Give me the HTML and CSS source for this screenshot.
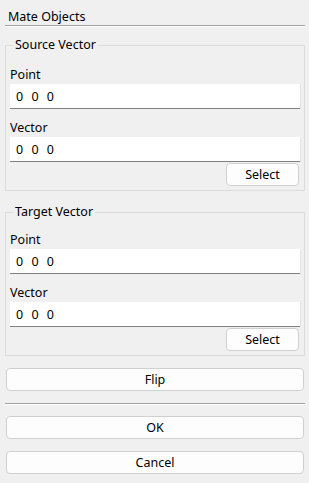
FILE: index.html
```html
<!DOCTYPE html>
<html lang="en">
<head>
  <meta charset="UTF-8" />
  <title>Mate Objects</title>
  <link rel="stylesheet" href="styles.css">
</head>
<body>

<div class="panel">
  <div class="header">Mate Objects</div>

  <fieldset class="group">
    <legend>Source Vector</legend>
    <label>Point</label>
    <input type="text" class="vec" value="0 0 0" />
    <label>Vector</label>
    <input type="text" class="vec" value="0 0 0" />
    <div class="row">
      <button type="button" class="select">Select</button>
    </div>
  </fieldset>

  <fieldset class="group target">
    <legend>Target Vector</legend>
    <label>Point</label>
    <input type="text" class="vec" value="0 0 0" />
    <label>Vector</label>
    <input type="text" class="vec" value="0 0 0" />
    <div class="row">
      <button type="button" class="select">Select</button>
    </div>
  </fieldset>

  <button type="button" class="wide flip">Flip</button>
  <div class="sep"></div>
  <button type="button" class="wide ok">OK</button>
  <button type="button" class="wide cancel">Cancel</button>
</div>

</body>
</html>
```

FILE: styles.css
```css
body {
  margin: 0;
  background-color: #f0f0f0;
  font-family: "Noto Sans", Arial, sans-serif;
  font-size: 12.5px;
  color: #000;
}

.panel {
  margin: 0 4px 0 5px;
  display: flex;
  flex-direction: column;
}

.header {
  padding: 8px 3px 0;
  line-height: 17px;
  border-bottom: 1px solid #a0a0a0;
  box-shadow: 0 1px 0 #fff;
}

.group {
  margin: 11px 0 0;
  padding: 0 4px 4px;
  border: 1px solid #dcdcdc;
  display: flex;
  flex-direction: column;
  min-width: 0;
}

.group.target {
  margin-top: 13px;
}

legend {
  margin-left: 3px;
  padding: 0 2px;
  line-height: 16px;
}

label {
  display: block;
  line-height: 16px;
  margin: 11px 0 1px;
}

legend + label {
  margin-top: 14px;
}

.target legend + label {
  margin-top: 12px;
}

input.vec {
  height: 24px;
  margin: 0;
  padding: 0 6px;
  border: none;
  border-bottom: 1px solid #808080;
  box-shadow: 1px 0 0 #e4e4e4;
  background: #fff;
  font-family: inherit;
  font-size: 12.5px;
  color: #000;
  word-spacing: 5px;
  outline: none;
}

.row {
  display: flex;
  justify-content: flex-end;
  padding: 1px 1px 0;
}

button {
  font-family: inherit;
  font-size: 12.5px;
  color: #000;
  background: #fdfdfd;
  border: 1px solid #d0d0d0;
  border-radius: 4px;
  height: 23px;
  padding: 0;
}

button.select {
  width: 73px;
}

button.wide {
  margin: 0 1px 0 1px;
}

button.flip {
  margin-top: 12px;
}

.sep {
  margin-top: 12px;
  border-top: 1px solid #a0a0a0;
  box-shadow: 0 1px 0 #fff;
}

button.ok {
  margin-top: 12px;
}

button.cancel {
  margin-top: 12px;
}
```
